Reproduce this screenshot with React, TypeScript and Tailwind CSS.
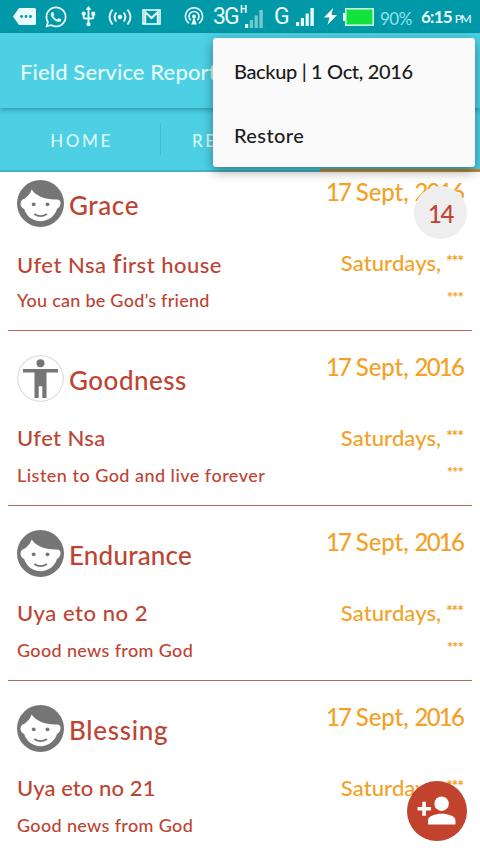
import React from "react";
import { FaWhatsapp } from "react-icons/fa";
import { MdUsb } from "react-icons/md";

type Visit = {
  name: string;
  nameClass: string;
  avatar: "face" | "person";
  place: React.ReactNode;
  placeClass: string;
  topic: string;
  topicClass: string;
};

const visits: Visit[] = [
  {
    name: "Grace",
    nameClass: "tracking-[0.6px]",
    avatar: "face",
    place: (
      <>
        Ufet Nsa <span className="text-[26px]">f</span>irst house
      </>
    ),
    placeClass: "tracking-[0.5px]",
    topic: "You can be God’s friend",
    topicClass: "tracking-[0.25px]",
  },
  {
    name: "Goodness",
    nameClass: "tracking-[0.5px]",
    avatar: "person",
    place: "Ufet Nsa",
    placeClass: "tracking-[0.4px]",
    topic: "Listen to God and live forever",
    topicClass: "tracking-[0.48px]",
  },
  {
    name: "Endurance",
    nameClass: "tracking-[0.2px]",
    avatar: "face",
    place: "Uya eto no 2",
    placeClass: "tracking-[0.55px]",
    topic: "Good news from God",
    topicClass: "tracking-[0.35px]",
  },
  {
    name: "Blessing",
    nameClass: "tracking-[0.7px]",
    avatar: "face",
    place: "Uya eto no 21",
    placeClass: "tracking-[0.1px]",
    topic: "Good news from God",
    topicClass: "tracking-[0.35px]",
  },
];

function FaceAvatar() {
  return (
    <svg viewBox="0 0 47 47" className="size-[47px] shrink-0">
      <circle cx="23.5" cy="23.5" r="23.5" fill="#757575" />
      <path
        d="M14.7 9.5C19 16 28 20 40.5 19.5L42.5 20.3Q43.8 21.5 43.5 24Q43 27.5 40 29C37.5 36.5 31 41.2 23.5 41.2S9.5 36.5 7.2 29Q3.9 27.5 3.5 24Q3.300 21.500 5.200 19.800C9.500 18 13 14.500 14.700 9.500Z"
        fill="#fff"
      />
      <circle cx="16.700" cy="24.300" r="1.900" fill="#757575" />
      <circle cx="30.500" cy="24.300" r="1.900" fill="#757575" />
      <path d="M17.3 34Q23.5 38.3 30 34" fill="none" stroke="#757575" strokeWidth="1.700" />
    </svg>
  );
}

function PersonAvatar() {
  return (
    <svg viewBox="0 0 47 47" className="size-[47px] shrink-0">
      <circle cx="23.5" cy="23.5" r="22.8" fill="#fff" stroke="#dedede" strokeWidth="1.2" />
      <circle cx="23.5" cy="8.3" r="4" fill="#757575" />
      <path d="M6 14H41V17.6H29.5V43H25.3V31.2H21.7V43H17.5V17.6H6Z" fill="#757575" />
    </svg>
  );
}

function Signal({ faded }: { faded?: boolean }) {
  return (
    <svg viewBox="0 0 18 18" className="h-[18px] w-[18px]" fill="#e8fbfd">
      <rect x="0" y="14" width="3.2" height="4" />
      <rect x="4.8" y="10" width="3.2" height="8" opacity={faded ? 0.5 : 1} />
      <rect x="9.6" y="5.5" width="3.2" height="12.5" opacity={faded ? 0.5 : 1} />
      <rect x="14.4" y="0" width="3.4" height="18" opacity={faded ? 0.5 : 1} />
    </svg>
  );
}

function StatusBar() {
  return (
    <div className="flex h-[33px] shrink-0 items-center bg-[#0199a8] pl-[13px] text-[#e8fbfd]">
      <svg viewBox="0 0 23 17" className="h-[17px] w-[23px]">
        <path d="M6 0H21.5Q23 0 23 1.5V15.5Q23 17 21.5 17H6L0 8.5Z" fill="#e8fbfd" />
        <circle cx="8.5" cy="8.5" r="1.4" fill="#0199a8" />
        <circle cx="13" cy="8.5" r="1.4" fill="#0199a8" />
        <circle cx="17.5" cy="8.5" r="1.4" fill="#0199a8" />
      </svg>
      <FaWhatsapp className="ml-[8px] size-[24px]" />
      <MdUsb className="ml-[9px] size-[23px]" />
      <svg viewBox="0 0 24 18" className="ml-[8px] h-[18px] w-[24px]" fill="none" stroke="#e8fbfd" strokeWidth="1.9">
        <circle cx="12" cy="9" r="2.3" fill="#e8fbfd" stroke="none" />
        <path d="M8.3 4.5Q5 9 8.3 13.5M15.7 4.5Q19 9 15.7 13.5M4.5 1.5Q-1.5 9 4.5 16.5M19.5 1.5Q25.5 9 19.5 16.5" />
      </svg>
      <svg viewBox="0 0 19 16" className="ml-[10px] h-[16px] w-[19px]" fill="none" stroke="#e8fbfd">
        <rect x="1" y="1" width="17" height="14" strokeWidth="1.6" />
        <path d="M3.2 15V3L9.5 9L15.8 3V15" strokeWidth="2" />
      </svg>
      <svg viewBox="0 0 20 19" className="ml-[23px] h-[19px] w-[20px]" fill="none" stroke="#e8fbfd" strokeWidth="1.6">
        <path d="M5 16.3A8.6 8.6 0 1 1 15 16.3M6.7 13.2A5 5 0 1 1 13.3 13.2" />
        <circle cx="10" cy="9.5" r="2" fill="#e8fbfd" stroke="none" />
        <path d="M10 10L7.2 17.5H12.8Z" fill="#e8fbfd" stroke="none" />
      </svg>
      <span className="ml-[9px] w-[27px] font-[Roboto] text-[23px] leading-none tracking-[-2px]">3G</span>
      <div className="flex h-[23px] w-[24px] items-end">
        <span className="w-[5px] self-start font-[Roboto] text-[10px] font-bold leading-[9px]">H</span>
        <Signal faded />
      </div>
      <span className="ml-[10px] w-[22px] font-[Roboto] text-[23px] leading-none">G</span>
      <div className="flex h-[19px] items-end">
        <Signal />
      </div>
      <svg viewBox="0 0 13 17" className="ml-[10px] h-[17px] w-[13px]" fill="#fff">
        <path d="M9 0L0 9.5H5.5L3.5 17L13 7H7.5Z" />
      </svg>
      <svg viewBox="0 0 31 18" className="ml-[6px] h-[18px] w-[31px]">
        <rect x="0" y="5" width="3" height="8" fill="#e8fbfd" />
        <rect x="2.7" y="0.8" width="27.5" height="16.4" fill="#12e23d" stroke="#d9f8e4" strokeWidth="1.5" />
      </svg>
      <span className="ml-[6px] w-[41px] pt-[3px] text-[17px] leading-none tracking-[-0.5px] text-[#8fe3ea]">90%</span>
      <span className="flex items-baseline gap-[3px] whitespace-nowrap text-[17px] font-bold leading-none tracking-[-0.8px]">
        6:15<span className="text-[12px] font-medium tracking-[-1.5px]">PM</span>
      </span>
    </div>
  );
}

function VisitRow({ visit }: { visit: Visit }) {
  return (
    <div className="mx-[8px] flex h-[175px] shrink-0 justify-between whitespace-nowrap border-b-[1.5px] border-[#b9675c] px-[9px] font-medium">
      <div className="flex flex-col pt-[24px] text-[#bd4433]">
        <div className="flex h-[47px] gap-[5px]">
          {visit.avatar === "face" ? <FaceAvatar /> : <PersonAvatar />}
          <span className={`pt-[2px] text-[26px] leading-[47px] ${visit.nameClass}`}>{visit.name}</span>
        </div>
        <span className={`mt-[22px] h-[28px] text-[22px] leading-[28px] ${visit.placeClass}`}>{visit.place}</span>
        <span className={`mt-[11px] text-[18px] leading-[24px] ${visit.topicClass}`}>{visit.topic}</span>
      </div>
      <div className="flex flex-col items-end pt-[21px] text-[#f3a127]">
        <span className="text-[24px] leading-[30px]">
          <span className="tracking-[-2px]">17</span>
          <span className="tracking-[-0.1px]"> Sept, </span>
          <span className="tracking-[-1.8px]">2016</span>
        </span>
        <div className="mt-[42px] flex h-[28px] gap-[5px]">
          <span className="text-[22px] leading-[28px] tracking-[0.1px]">Saturdays,</span>
          <span className="text-[15px] font-black leading-[22px] tracking-[-0.8px]">***</span>
        </div>
        <span className="mt-[9px] text-[14px] font-black leading-[21px] tracking-[-0.6px]">***</span>
      </div>
    </div>
  );
}

export default function App() {
  return (
    <div className="relative flex h-[854px] w-[480px] flex-col overflow-hidden bg-white font-[Lato,sans-serif]">
      <StatusBar />
      <header className="z-10 flex h-[75px] shrink-0 items-center bg-[#4dd0e4] pl-[20px] pt-[1px] shadow-[0_2px_5px_rgba(0,70,80,0.4)]">
        <h1 className="whitespace-nowrap text-[22px] font-medium tracking-[0.13px] text-[#e6fbfd]">Field Service Report</h1>
      </header>
      <nav className="flex h-[64px] shrink-0 items-stretch border-b-2 border-[#43b3c2] bg-[#4dd0e4] text-[17px] font-medium tracking-[2.6px] text-[#d8f8fb]">
        <div className="flex w-[160px] items-center justify-center pl-[3px] pt-[4px]">HOME</div>
        <div className="my-[15px] w-px bg-[#43bccb]" />
        <div className="flex w-[159px] items-center pl-[31px] pt-[4px]">RETURN</div>
        <div className="-mb-[2px] flex-1 border-b-[3px] border-[#c38a35]" />
      </nav>
      <main className="flex-1 overflow-hidden">
        <div className="-mt-[16px] flex flex-col">
          {visits.map((visit) => (
            <VisitRow key={visit.name} visit={visit} />
          ))}
        </div>
      </main>

      <div className="absolute left-[414px] top-[186px] flex size-[53px] items-center justify-center rounded-full bg-[#eeeeee] pt-[3px] text-[24px] font-medium tracking-[-1.5px] text-[#bd4433]">
        14
      </div>
      <div className="absolute left-[213px] top-[38px] z-20 flex h-[129px] w-[262px] flex-col rounded-[3px] bg-[#fafafa] pl-[21px] text-[20px] font-medium text-[#1c1c1c] shadow-[0_4px_12px_rgba(0,0,0,0.4)]">
        <div className="flex h-[66px] items-center whitespace-nowrap tracking-[-0.35px]">Backup | 1 Oct, 2016</div>
        <div className="flex h-[61px] items-center tracking-[0.4px]">Restore</div>
      </div>
      <button className="absolute left-[407px] top-[781px] size-[60px] rounded-full bg-[#c1432d]">
        <svg viewBox="0 0 60 60" className="size-[60px]" fill="#fff">
          <circle cx="34.6" cy="22.7" r="7.2" />
          <path d="M21 43.500V39.500C21 35 28.500 32.800 34.700 32.800S48.500 35 48.500 39.500V43.500Z" />
          <path d="M15.300 20.800H18.900V26H24V29.500H18.900V34.800H15.300V29.500H10.500V26H15.300Z" />
        </svg>
      </button>
    </div>
  );
}
